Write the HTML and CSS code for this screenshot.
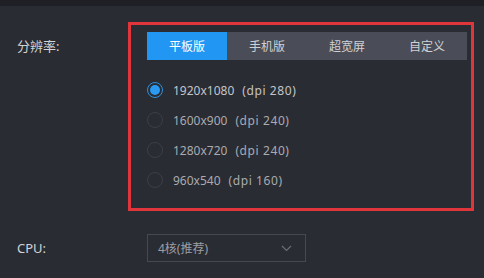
FILE: index.html
```html
<!DOCTYPE html>
<html lang="zh">
<head>
<meta charset="utf-8">
<link rel="stylesheet" href="styles.css">
</head>
<body>
<div class="topbar"></div>
<div class="row res-row">
  <div class="label res-label">分辨率:</div>
  <div class="box">
    <div class="tabs">
      <div class="tab active">平板版</div>
      <div class="tab">手机版</div>
      <div class="tab">超宽屏</div>
      <div class="tab">自定义</div>
    </div>
    <div class="options">
      <div class="opt selected"><span class="radio"></span><span class="opt-text">1920x1080<span class="dpi">(dpi 280)</span></span></div>
      <div class="opt"><span class="radio"></span><span class="opt-text">1600x900<span class="dpi">(dpi 240)</span></span></div>
      <div class="opt"><span class="radio"></span><span class="opt-text">1280x720<span class="dpi">(dpi 240)</span></span></div>
      <div class="opt"><span class="radio"></span><span class="opt-text">960x540<span class="dpi">(dpi 160)</span></span></div>
    </div>
  </div>
</div>
<div class="row cpu-row">
  <div class="label">CPU:</div>
  <div class="select">
    <span class="select-text">4核(推荐)</span>
    <svg class="chev" width="11" height="7" viewBox="0 0 11 7"><path d="M1 1 L5.5 5.5 L10 1" fill="none" stroke="#6b6e77" stroke-width="1.2"/></svg>
  </div>
</div>
</body>
</html>
```

FILE: styles.css
```css
html, body {
  margin: 0;
  padding: 0;
}
body {
  width: 484px;
  height: 278px;
  overflow: hidden;
  background: #2a2c33;
  font-family: "Noto Sans", "Noto Sans CJK SC", sans-serif;
  color: #c9cace;
}
.topbar {
  height: 6px;
  background: #1f2025;
}
.row {
  display: flex;
  align-items: flex-start;
}
.res-row {
  margin-top: 16px;
}
.label {
  width: 128px;
  padding-left: 17px;
  box-sizing: border-box;
  font-size: 13px;
  line-height: 28px;
  color: #d2d3d6;
  flex-shrink: 0;
}
.res-label {
  margin-top: 10px;
}
.box {
  width: 346px;
  height: 189px;
  box-sizing: border-box;
  border: 3px solid #e0353b;
  padding: 7px 4px 0 16px;
  flex-shrink: 0;
}
.tabs {
  display: flex;
  width: 320px;
  height: 28px;
  background: #4a4d57;
}
.tab {
  width: 80px;
  display: flex;
  align-items: center;
  justify-content: center;
  font-size: 12px;
  color: #d0d1d5;
}
.tab.active {
  background: #2196f3;
  color: #ffffff;
}
.options {
  margin-top: 15px;
}
.opt {
  height: 30px;
  display: flex;
  align-items: center;
}
.radio {
  width: 16px;
  height: 16px;
  box-sizing: border-box;
  border-radius: 50%;
  border: 1px solid #3c3f47;
  margin-right: 10px;
  display: flex;
  align-items: center;
  justify-content: center;
}
.selected .radio {
  border-color: #2e8fdc;
}
.selected .radio::after {
  content: "";
  width: 10px;
  height: 10px;
  border-radius: 50%;
  background: #2b9af3;
}
.opt-text {
  font-size: 12px;
  color: #a9abb0;
}
.dpi {
  margin-left: 8px;
  letter-spacing: 0.6px;
}
.selected .opt-text {
  color: #c3c5c9;
}
.cpu-row {
  margin-top: 23px;
}
.cpu-row .label {
  width: 147px;
  margin-top: 0;
}
.select {
  width: 159px;
  height: 28px;
  box-sizing: border-box;
  border: 1px solid #464951;
  display: flex;
  align-items: center;
  justify-content: space-between;
  padding: 0 13px 0 10px;
}
.select-text {
  font-size: 12px;
  color: #9c9ea4;
}
.chev {
  display: block;
}
```
